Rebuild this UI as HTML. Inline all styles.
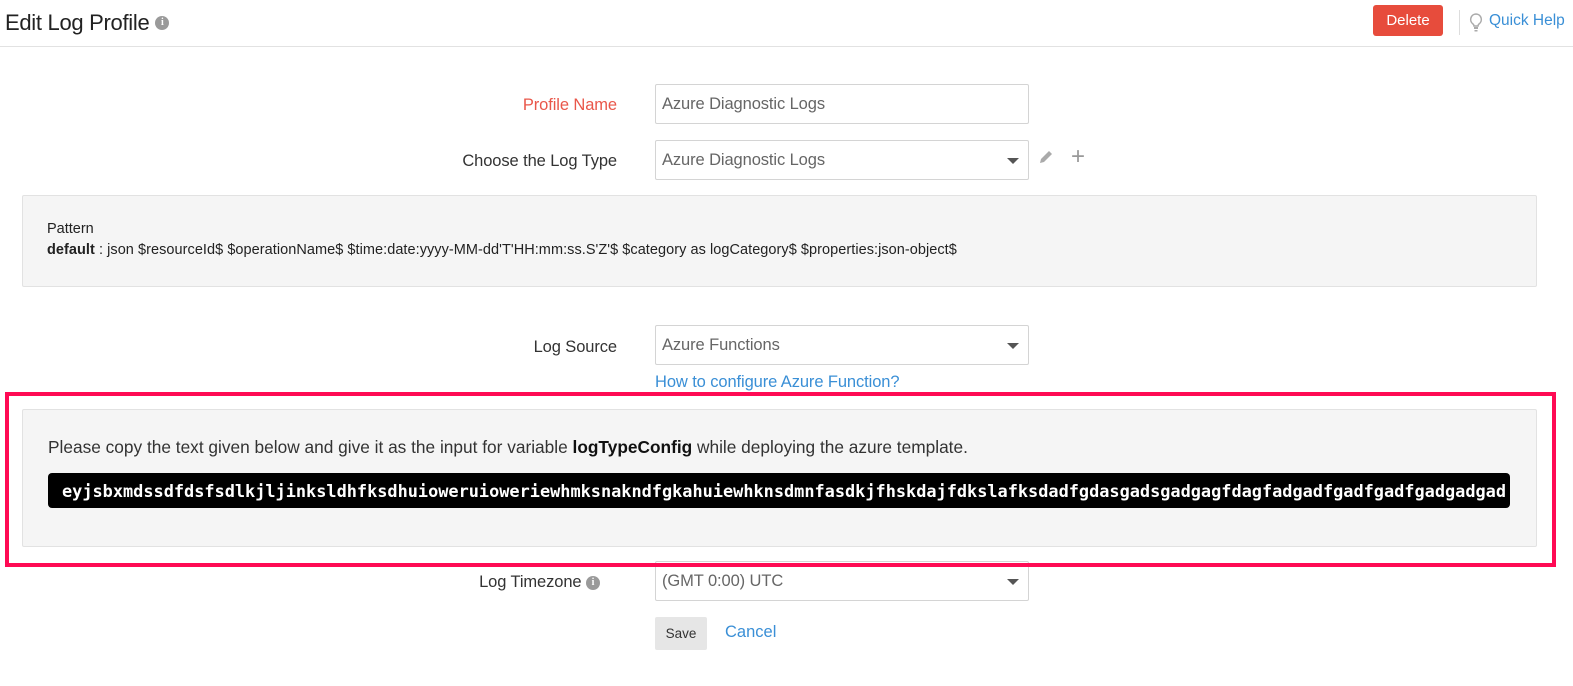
<!DOCTYPE html>
<html><head><meta charset="utf-8"><style>
*{margin:0;padding:0;box-sizing:border-box}
body{width:1573px;height:686px;background:#fff;font-family:"Liberation Sans",sans-serif;color:#333;position:relative;overflow:hidden}
.a{position:absolute;white-space:nowrap}
.lbl{font-size:16.5px;color:#333;text-align:right;width:300px;letter-spacing:-0.1px}
.inp{position:absolute;left:655px;width:374px;height:40px;border:1px solid #d4d4d4;border-radius:2px;background:#fff;font-size:16.5px;color:#666;padding:10px 0 0 6px;letter-spacing:-0.1px}
.car{position:absolute;right:9px;top:17px;width:0;height:0;border-left:6px solid transparent;border-right:6px solid transparent;border-top:6px solid #555}
.info{display:inline-block;width:14px;height:14px;border-radius:50%;background:#9a9a9a;color:#fff;font-size:10px;font-weight:bold;text-align:center;line-height:14px;font-family:"Liberation Serif",serif;vertical-align:middle}
</style></head><body>
<div class="a" style="left:5px;top:10px;font-size:22px;color:#222;letter-spacing:-0.3px">Edit Log Profile <span class="info" style="margin-top:-3px">i</span></div>
<div class="a" style="left:0;top:46px;width:1573px;height:1px;background:#e2e2e2"></div>
<div class="a" style="left:1373px;top:5px;width:70px;height:31px;background:#e74c3c;border-radius:3px;color:#fff;font-size:15px;text-align:center;line-height:31px">Delete</div>
<div class="a" style="left:1459px;top:10px;width:1px;height:25px;background:#ddd"></div>
<svg class="a" style="left:1469px;top:13px" width="14" height="20" viewBox="0 0 14 20"><path d="M7 1a5.5 5.5 0 0 0-3 10c.6.5 1 1.2 1 2h4c0-.8.4-1.5 1-2A5.5 5.5 0 0 0 7 1z" fill="none" stroke="#aaa" stroke-width="1.5"/><rect x="5" y="14" width="4" height="2" fill="#aaa"/><rect x="5.5" y="17" width="3" height="1.5" fill="#aaa"/></svg>
<div class="a" style="left:1489px;top:12px;font-size:15.5px;color:#3a8fd6">Quick Help</div>

<div class="a lbl" style="left:317px;top:96px;color:#e9574a">Profile Name</div>
<div class="inp" style="top:84px">Azure Diagnostic Logs</div>
<div class="a lbl" style="left:317px;top:152px">Choose the Log Type</div>
<div class="inp" style="top:140px">Azure Diagnostic Logs<div class="car"></div></div>
<svg class="a" style="left:1038px;top:149px" width="16" height="16" viewBox="0 0 16 16"><path d="M2 14l1-4 8-8 3 3-8 8z" fill="#aaa"/></svg>
<div class="a" style="left:1071px;top:143px;font-size:24px;color:#999;font-weight:300">+</div>

<div class="a" style="left:22px;top:195px;width:1515px;height:92px;background:#f5f5f5;border:1px solid #e2e2e2;border-radius:2px"></div>
<div class="a" style="left:47px;top:221px;font-size:14.5px;color:#222">Pattern</div>
<div class="a" style="left:47px;top:242px;font-size:14.5px;color:#222;letter-spacing:0.05px"><b>default</b> : json $resourceId$ $operationName$ $time:date:yyyy-MM-dd'T'HH:mm:ss.S'Z'$ $category as logCategory$ $properties:json-object$</div>

<div class="a lbl" style="left:317px;top:338px">Log Source</div>
<div class="inp" style="top:325px">Azure Functions<div class="car"></div></div>
<div class="a" style="left:655px;top:373px;font-size:16.5px;color:#3a8fd6;letter-spacing:-0.1px">How to configure Azure Function?</div>

<div class="inp" style="top:561px">(GMT 0:00) UTC<div class="car"></div></div>
<div class="a" style="left:22px;top:409px;width:1515px;height:138px;background:#f5f5f5;border:1px solid #e2e2e2;border-radius:2px"></div>
<div class="a" style="left:5px;top:392px;width:1551px;height:175px;border:4px solid #ff0a54"></div>
<div class="a" style="left:48px;top:437px;font-size:17.3px;color:#333;letter-spacing:0px">Please copy the text given below and give it as the input for variable <b style="color:#111">logTypeConfig</b> while deploying the azure template.</div>
<div class="a" style="left:48px;top:473px;width:1462px;height:35px;background:#000;border-radius:4px"></div>
<div class="a" style="left:62px;top:481px;font-family:'DejaVu Sans Mono',monospace;font-weight:bold;font-size:16.9px;color:#fff">eyjsbxmdssdfdsfsdlkjljinksldhfksdhuioweruioweriewhmksnakndfgkahuiewhknsdmnfasdkjfhskdajfdkslafksdadfgdasgadsgadgagfdagfadgadfgadfgadfgadgadgad</div>

<div class="a lbl" style="left:300px;top:573px">Log Timezone <span class="info">i</span></div>
<div class="a" style="left:655px;top:617px;width:52px;height:33px;background:#e6e6e6;border-radius:2px;font-size:13.5px;color:#333;text-align:center;line-height:33px">Save</div>
<div class="a" style="left:725px;top:623px;font-size:16.5px;color:#3a8fd6">Cancel</div>
</body></html>
